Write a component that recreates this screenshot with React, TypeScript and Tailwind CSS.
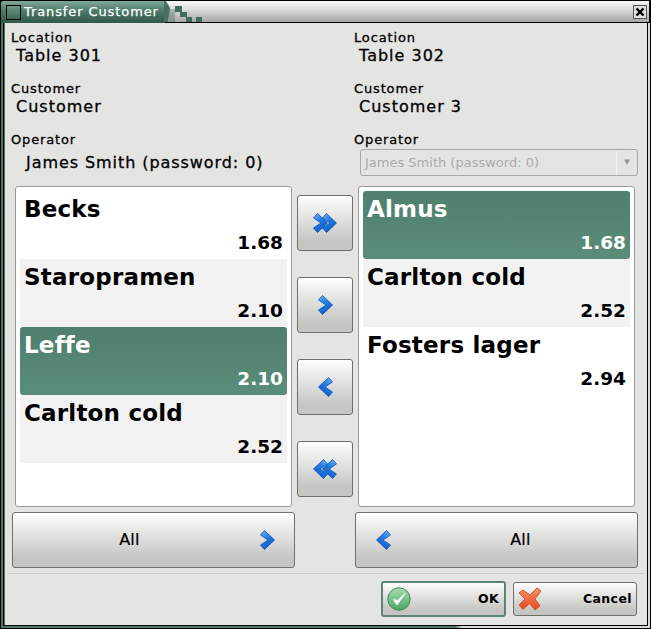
import React from "react";

interface Item {
  name: string;
  price: string;
  selected?: boolean;
}

const leftItems: Item[] = [
  { name: "Becks", price: "1.68" },
  { name: "Staropramen", price: "2.10" },
  { name: "Leffe", price: "2.10", selected: true },
  { name: "Carlton cold", price: "2.52" },
];

const rightItems: Item[] = [
  { name: "Almus", price: "1.68", selected: true },
  { name: "Carlton cold", price: "2.52" },
  { name: "Fosters lager", price: "2.94" },
];

const btnGradient = "bg-[linear-gradient(to_bottom,#ffffff_0%,#eeeeec_22%,#dcdcda_50%,#c6c7c3_82%,#c5c6c2_100%)]";

function Arrow({ dir, double }: { dir: "left" | "right"; double?: boolean }) {
  const id = `arrow-${dir}-${double ? "d" : "s"}`;
  const chevron = "M0.5 5 L4.5 0.5 L14.5 10 L4.5 19.5 L0.5 15 L8 10 Z";
  const w = double ? 24 : 15;
  return (
    <svg width={w} height={20} viewBox={`0 0 ${w} 20`} className={dir === "left" ? "-scale-x-100" : ""}>
      <defs>
        <linearGradient id={id} x1="0" y1="0" x2="0.6" y2="1">
          <stop offset="0" stopColor="#7ab8f8" />
          <stop offset="0.45" stopColor="#2280ea" />
          <stop offset="1" stopColor="#0f58c4" />
        </linearGradient>
      </defs>
      {double && <path d={chevron} transform="translate(9 0)" fill={`url(#${id})`} stroke="#0c4cb0" strokeWidth="0.8" />}
      <path d={chevron} fill={`url(#${id})`} stroke="#0c4cb0" strokeWidth="0.8" />
    </svg>
  );
}

function MoveButton({ dir, double }: { dir: "left" | "right"; double?: boolean }) {
  return (
    <button className={`w-[56px] h-[56px] flex items-center justify-center rounded-[3px] border border-[#6e6e6a] ${btnGradient}`}>
      <Arrow dir={dir} double={double} />
    </button>
  );
}

function ItemList({ items }: { items: Item[] }) {
  return (
    <div className="w-[277px] h-[321px] rounded-[3px] border border-[#9a9a98] bg-white p-[4px]">
      {items.map((item, i) => (
        <div
          key={item.name}
          className={`h-[68px] flex flex-col px-[4px] pt-px ${
            item.selected
              ? "rounded-[3px] bg-[linear-gradient(to_bottom,#4f7f6d,#5a8d79)] text-white"
              : i % 2 === 1
                ? "bg-[#f2f2f2] text-black"
                : "text-black"
          }`}
        >
          <div className="text-[23px] font-bold leading-[34px] tracking-[0.2px]">{item.name}</div>
          <div className="text-[18.5px] font-bold leading-[33px] text-right">{item.price}</div>
        </div>
      ))}
    </div>
  );
}

function Label({ children }: { children: string }) {
  return <div className="text-[13px] leading-[15px] tracking-[0.85px] [-webkit-text-stroke:0.3px_black]">{children}</div>;
}

function Info({ label, value }: { label: string; value: string }) {
  return (
    <div className="h-[51px]">
      <Label>{label}</Label>
      <div className="text-[16px] leading-[20px] pl-[5px] pt-px tracking-[1px] [-webkit-text-stroke:0.3px_black] whitespace-nowrap">{value}</div>
    </div>
  );
}

function CheckIcon() {
  return (
    <svg width="24" height="24" viewBox="0 0 24 24">
      <defs>
        <linearGradient id="okg" x1="0" y1="0" x2="0" y2="1">
          <stop offset="0" stopColor="#a9dcb0" />
          <stop offset="1" stopColor="#4aa765" />
        </linearGradient>
      </defs>
      <circle cx="12" cy="12" r="11.2" fill="url(#okg)" stroke="#3f8a58" />
      <path d="M6.5 12.5 L10 18 L18 6.5 L10.5 13.5 Z" fill="#fff" stroke="#fff" strokeLinejoin="round" />
    </svg>
  );
}

function CrossIcon() {
  return (
    <svg width="24" height="24" viewBox="0 0 24 24">
      <defs>
        <linearGradient id="xg" x1="0" y1="0" x2="0" y2="1">
          <stop offset="0" stopColor="#f7906a" />
          <stop offset="1" stopColor="#e8481c" />
        </linearGradient>
      </defs>
      <path
        d="M1 6 L5 3 L12 8 L19 1 L23 4 L17 12 L22 19 L17 23 L11.5 16.5 L5 22.5 L1 18 L7 12 Z"
        fill="url(#xg)"
        stroke="#c9562f"
        strokeLinejoin="round"
      />
    </svg>
  );
}

export default function App() {
  return (
    <div className="w-[651px] h-[629px] bg-black flex flex-col text-black overflow-hidden font-['DejaVu_Sans',sans-serif]">
      {/* title bar */}
      <div className="h-[23px] flex shrink-0 relative">
        <div className="w-[164px] h-[22px] mt-px ml-px rounded-tl-[2px] bg-[linear-gradient(to_bottom,#80a898,#4d7b69_45%,#2f5848)] flex items-center pl-[5px] gap-[3px]">
          <div className="w-[15px] h-[15px] border border-black bg-[linear-gradient(to_bottom,#6c9786,#3e6a59)]" />
          <span className="text-[13px] text-white tracking-[0.9px] [-webkit-text-stroke:0.25px_white] whitespace-nowrap">Transfer Customer</span>
        </div>
        <div className="flex-1 h-[21px] mt-px mr-[2px] bg-[linear-gradient(to_bottom,#f8f8f7,#dcdcda_40%,#a6a7a4)] flex items-center justify-end pr-[2px]">
          <div className="w-[14px] h-[14px] border border-[#555] bg-[#dededc] flex items-center justify-center">
            <svg width="10" height="10" viewBox="0 0 10 10">
              <path d="M1.5 1.5 L8.5 8.5 M8.5 1.5 L1.5 8.5" stroke="#000" strokeWidth="2.4" />
            </svg>
          </div>
        </div>
        {/* stepped corner of the title tab */}
        <svg width="42" height="22" className="absolute left-[164px] top-px">
          <polygon points="0,0 2,0 6,7 4,21 0,21" fill="#45715f" />
          <rect x="5" y="8" width="6" height="13" fill="#3f6b5a" opacity="0.35" />
          <rect x="11" y="5" width="7" height="6" fill="#3f6f5c" />
          <rect x="16" y="11" width="7" height="5" fill="#3f6f5c" />
          <rect x="22" y="16" width="6" height="5" fill="#3f6f5c" />
          <rect x="32" y="16" width="6" height="5" fill="#3f6f5c" />
        </svg>
      </div>

      {/* frame */}
      <div className="flex-1 flex flex-col min-h-0 ml-px mr-px mb-px bg-[linear-gradient(to_right,#4d7b69_0%,#4d7b69_70%,#d8d8d6_71%,#d8d8d6_100%)]">
        <div className="flex-1 flex flex-col min-h-0 ml-[2px] mr-[2px] mb-[2px] border border-t-0 border-black">
          <div className="flex-1 flex flex-col min-h-0 ml-px bg-[#e4e4e3]">
            {/* info */}
            <div className="h-[163px] shrink-0 flex pl-[6px] pt-[7px] gap-[65px]">
              <div className="w-[278px] flex flex-col">
                <Info label="Location" value="Table 301" />
                <Info label="Customer" value="Customer" />
                <Label>Operator</Label>
                <div className="text-[16px] leading-[20px] pl-[15px] mt-[6px] tracking-[0.93px] [-webkit-text-stroke:0.3px_black] whitespace-nowrap">James Smith (password: 0)</div>
              </div>
              <div className="w-[278px] flex flex-col">
                <Info label="Location" value="Table 302" />
                <Info label="Customer" value="Customer 3" />
                <Label>Operator</Label>
                <div className="ml-[6px] mt-[2px] w-[278px] h-[27px] rounded-[3px] border border-[#a8a8a6] flex items-center text-[13px] text-[#ababa9] pl-[4px]">
                  <span className="flex-1 whitespace-nowrap">James Smith (password: 0)</span>
                  <span className="w-[21px] h-[24px] border-l border-[#f4f4f3] flex items-center justify-center text-[7px] text-[#8f8f8d]">▼</span>
                </div>
              </div>
            </div>

            {/* lists and move buttons */}
            <div className="h-[321px] shrink-0 flex pl-[10px] gap-[5px]">
              <ItemList items={leftItems} />
              <div className="w-[56px] pt-[9px] flex flex-col gap-[26px]">
                <MoveButton dir="right" double />
                <MoveButton dir="right" />
                <MoveButton dir="left" />
                <MoveButton dir="left" double />
              </div>
              <ItemList items={rightItems} />
            </div>

            {/* all buttons */}
            <div className="mt-[5px] h-[56px] shrink-0 flex pl-[7px] gap-[60px]">
              <button className={`w-[283px] h-[56px] rounded-[3px] border border-[#6e6e6a] flex items-center text-[16px] tracking-[0.3px] [-webkit-text-stroke:0.2px_black] ${btnGradient}`}>
                <span className="w-[233px] text-center">All</span>
                <span className="ml-[14px] flex"><Arrow dir="right" /></span>
              </button>
              <button className={`w-[283px] h-[56px] rounded-[3px] border border-[#6e6e6a] flex items-center text-[16px] tracking-[0.3px] [-webkit-text-stroke:0.2px_black] pl-[20px] ${btnGradient}`}>
                <span className="flex"><Arrow dir="left" /></span>
                <span className="ml-[13px] flex-1 text-center">All</span>
              </button>
            </div>

            {/* separator */}
            <div className="mt-[5px] ml-[2px] mr-[2px] h-[2px] shrink-0 border-t border-[#cfcfcd] border-b-white" />

            {/* footer */}
            <div className="mt-[6px] flex justify-end gap-[7px] pr-[10px]">
              <button className={`w-[125px] h-[36px] rounded-[3px] border-[2px] border-[#5f8474] flex items-center pl-[4px] pr-[5px] text-[12.5px] font-bold tracking-[0.4px] ${btnGradient}`}>
                <CheckIcon />
                <span className="flex-1 text-right">OK</span>
              </button>
              <button className={`w-[124px] h-[34px] mt-px rounded-[3px] border border-[#6e6e6a] flex items-center pl-[4px] pr-[4px] text-[12.5px] font-bold tracking-[0.4px] ${btnGradient}`}>
                <CrossIcon />
                <span className="flex-1 text-right">Cancel</span>
              </button>
            </div>
          </div>
        </div>
      </div>
    </div>
  );
}
